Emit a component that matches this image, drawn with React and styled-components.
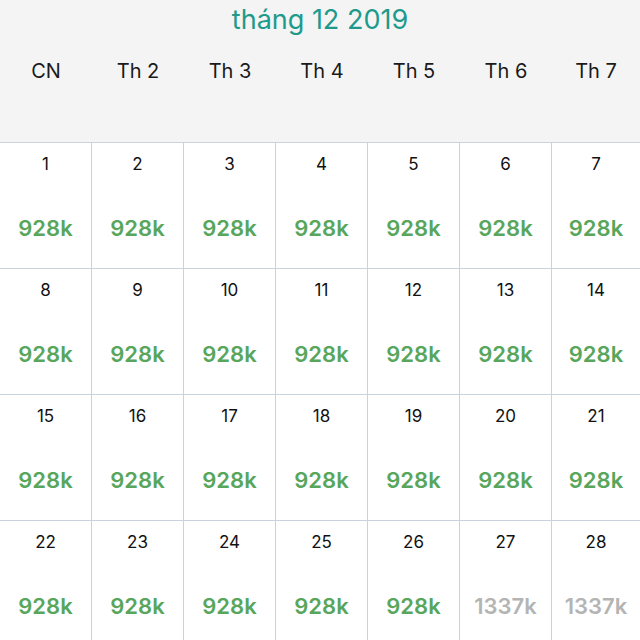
import React from 'react';
import styled, { createGlobalStyle } from 'styled-components';

// Styles
// -----------------------------------------------
const GlobalStyle = createGlobalStyle`
  html, body {
    margin: 0;
    padding: 0;
    background: #ffffff;
    font-family: Inter, "Liberation Sans", Arial, sans-serif;
  }
`;

const Page = styled.div`
  width: 640px;
  height: 640px;
  overflow: hidden;
  background: #ffffff;
`;

const Header = styled.header`
  height: 142px;
  background: #f4f4f5;
  display: flex;
  flex-direction: column;
`;

const Title = styled.div`
  height: 38px;
  display: flex;
  align-items: center;
  justify-content: center;
  font-size: 27px;
  color: #1e9a8c;
`;

const WeekRow = styled.div`
  display: grid;
  grid-template-columns: 92px repeat(5, 92px) 1fr;
  margin-top: 18px;
`;

const WeekDay = styled.div`
  text-align: center;
  font-size: 20px;
  line-height: 30px;
  color: #1a1a1a;
`;

const Grid = styled.div`
  display: grid;
  grid-template-columns: 92px repeat(5, 92px) 1fr;
  grid-auto-rows: 126px;
  border-top: 1px solid #c9d3de;
`;

const Cell = styled.div`
  display: flex;
  flex-direction: column;
  align-items: center;
  border-right: ${p => (p.$last ? 'none' : '1px solid #c9d3de')};
  border-bottom: 1px solid #c9d3de;
  box-sizing: border-box;
`;

const DayNum = styled.div`
  margin-top: 10px;
  font-size: 17px;
  line-height: 22px;
  color: #111111;
`;

const Price = styled.div`
  margin-top: 40px;
  font-size: 22px;
  line-height: 26px;
  font-weight: 600;
  color: ${p => (p.$muted ? '#b4b4b4' : '#58a65c')};
`;

// Data
// -----------------------------------------------
const weekDays = ['CN', 'Th 2', 'Th 3', 'Th 4', 'Th 5', 'Th 6', 'Th 7'];

const days = Array.from({ length: 28 }, (_, i) => ({
  day: i + 1,
  price: i + 1 >= 27 ? '1337k' : '928k',
  muted: i + 1 >= 27
}));

// -----------------------------------------------
// COMPONENT->APP --------------------------------
// -----------------------------------------------
export default function App() {
  return (
    <Page>
      <GlobalStyle />
      <Header>
        <Title>tháng 12 2019</Title>
        <WeekRow>
          {weekDays.map(d => (
            <WeekDay key={d}>{d}</WeekDay>
          ))}
        </WeekRow>
      </Header>
      <Grid>
        {days.map((d, i) => (
          <Cell key={d.day} $last={i % 7 === 6}>
            <DayNum>{d.day}</DayNum>
            <Price $muted={d.muted}>{d.price}</Price>
          </Cell>
        ))}
      </Grid>
    </Page>
  );
}
